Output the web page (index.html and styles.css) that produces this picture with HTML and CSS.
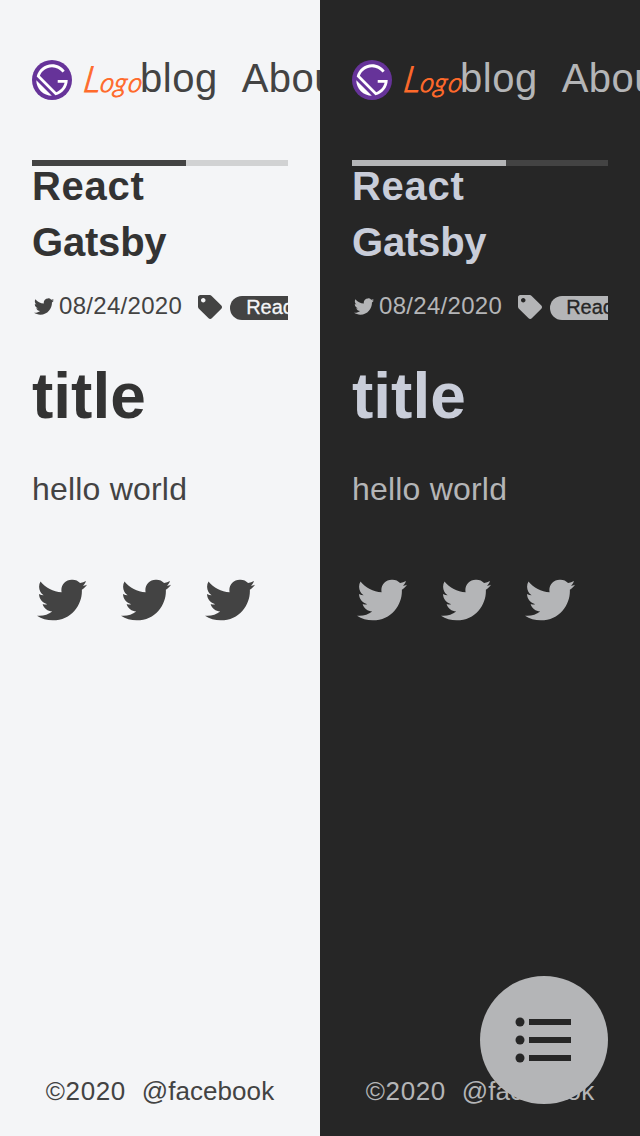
FILE: index.html
```html
<!DOCTYPE html>
<html lang="en">
<head>
<meta charset="utf-8">
<title>blog</title>
<link rel="stylesheet" href="styles.css">
</head>
<body>
<svg class="defs" aria-hidden="true">
  <symbol id="logo" viewBox="0 0 28 28"><circle cx="14" cy="14" r="14" fill="#639"/><path fill="#fff" d="M6.2 21.8C4.1 19.7 3 16.9 3 14.2L13.9 25c-2.8-.1-5.6-1.1-7.7-3.2zm10.2 2.9L3.3 11.6C4.4 6.7 8.8 3 14 3c3.7 0 6.9 1.8 8.9 4.5l-1.5 1.3C19.700 6.500 17 5 14 5c-3.900 0-7.200 2.500-8.500 6L17 22.500c2.900-1 5.100-3.500 5.800-6.500H18v-2h7c0 5.200-3.700 9.600-8.600 10.700z"/></symbol>
  <symbol id="bird" viewBox="96 174 832 676"><path d="M928 258c-22 9-45 15-72 18 25-17 45-45 55-80-30 18-62 30-98 35A170.100 170.100 0 0 0 672 174c-94.5 0-170.5 76.6-170.5 170.6 0 13.2 1.6 26.4 4.2 39.1-141.5-7.4-267.7-75-351.6-178.5a169.32 169.32 0 0 0-23.2 86.1c0 59.2 30.1 111.400 76 142.100a172 172 0 0 1-77.100-21.700v2.100c0 82.900 58.600 151.600 136.700 167.400a180.600 180.600 0 0 1-44.900 5.800c-11.100 0-21.600-1.100-32.200-2.600C211 652 273.900 701.100 348.800 702.700c-58.600 45.900-132 72.900-211.700 72.900-14.300 0-27.500-.5-41.200-2.100C171.500 822 261.200 850 357.800 850 671.400 850 843 590.200 843 364.700c0-7.400 0-14.800-.5-22.200 33.200-24.300 62.300-50 85.500-84.500z"/></symbol>
  <symbol id="tag" viewBox="0 0 512 512"><path d="M0 252V48C0 21.500 21.500 0 48 0h204a48 48 0 0 1 34 14l212 212c18.700 18.700 18.700 49.100 0 67.900L293.800 498c-18.700 18.700-49.100 18.700-67.900 0L14 286a48 48 0 0 1-14-34zM112 64c-26.500 0-48 21.500-48 48s21.500 48 48 48 48-21.500 48-48-21.500-48-48-48z"/></symbol>
</svg>
<main class="screens">
  <section class="screen light">
    <header class="nav">
      <svg class="mark"><use href="#logo"/></svg>
      <svg class="word" viewBox="0 0 60 48"><text y="36" transform="translate(8 0) skewX(-9)"><tspan class="cap" x="0">L</tspan><tspan x="17">o</tspan><tspan x="31">g</tspan><tspan x="45">o</tspan></text></svg>
      <a class="link">blog</a><a class="link">About</a>
    </header>
    <div class="progress"><div class="done"></div></div>
    <h2 class="post"><span class="loose">React</span><br>Gatsby</h2>
    <div class="meta">
      <svg class="small-bird"><use href="#bird"/></svg><span class="date">08/24/2020</span>
      <svg class="tag"><use href="#tag"/></svg><span class="pill">React</span>
    </div>
    <h1 class="title">title</h1>
    <p class="copy">hello world</p>
    <div class="social"><svg class="bird"><use href="#bird"/></svg><svg class="bird"><use href="#bird"/></svg><svg class="bird"><use href="#bird"/></svg></div>
    <footer class="footer"><span class="year">©2020</span><span>@facebook</span></footer>
  </section>
  <section class="screen dark">
    <header class="nav">
      <svg class="mark"><use href="#logo"/></svg>
      <svg class="word" viewBox="0 0 60 48"><text y="36" transform="translate(8 0) skewX(-9)"><tspan class="cap" x="0">L</tspan><tspan x="17">o</tspan><tspan x="31">g</tspan><tspan x="45">o</tspan></text></svg>
      <a class="link">blog</a><a class="link">About</a>
    </header>
    <div class="progress"><div class="done"></div></div>
    <h2 class="post"><span class="loose">React</span><br>Gatsby</h2>
    <div class="meta">
      <svg class="small-bird"><use href="#bird"/></svg><span class="date">08/24/2020</span>
      <svg class="tag"><use href="#tag"/></svg><span class="pill">React</span>
    </div>
    <h1 class="title">title</h1>
    <p class="copy">hello world</p>
    <div class="social"><svg class="bird"><use href="#bird"/></svg><svg class="bird"><use href="#bird"/></svg><svg class="bird"><use href="#bird"/></svg></div>
    <footer class="footer"><span class="year">©2020</span><span>@facebook</span></footer>
    <button class="fab" aria-label="Contents"><svg viewBox="0 0 24 24" width="72" height="72"><circle cx="4" cy="6" r="1.500"/><circle cx="4" cy="12" r="1.500"/><circle cx="4" cy="18" r="1.500"/><path d="M7 5h14v2H7zM7 11h14v2H7zM7 17h14v2H7z"/></svg></button>
  </section>
</main>
</body>
</html>
```
FILE: styles.css
```css
* { box-sizing: border-box; }
body { margin: 0; font-family: "Liberation Sans", Arial, sans-serif; }
.defs { display: none; }
.screens { display: grid; grid-template-columns: 320px 320px; height: 1136px; overflow: hidden; }
.screen { position: relative; display: flex; flex-direction: column; padding: 48px 32px 24px; overflow: hidden; background: var(--bg); color: var(--fg); }
.light { --bg: #f4f5f7; --fg: #434343; --head: #333; --rail: #d1d2d3; }
.dark { --bg: #262626; --fg: #b4b5b7; --head: #c9cdd9; --rail: #434343; }
svg { flex: none; fill: currentColor; }
.nav { display: flex; align-items: center; height: 64px; }
.mark { width: 40px; height: 40px; }
.word { width: 60px; height: 48px; margin-left: 8px; overflow: visible; font: italic 300 27px Lato, sans-serif; fill: #ff6a2b; stroke: #ff6a2b; stroke-width: .9px; }
.cap { font-size: 36px; }
.link { flex: none; font-size: 40px; line-height: 60px; margin-right: 24px; padding-bottom: 4px; letter-spacing: .5px; }
.progress { height: 6px; margin-top: 48px; background: var(--rail); }
.done { width: 60%; height: 6px; background: var(--fg); }
.post { margin: -8px 0 0; font-size: 40px; line-height: 56px; letter-spacing: -.2px; color: var(--head); }
.loose { letter-spacing: .7px; }
.meta { display: flex; align-items: center; height: 32px; margin-top: 21px; overflow: hidden; white-space: nowrap; }
.small-bird { width: 20px; height: 17px; margin: 0 5px 2px 2px; }
.date { padding-bottom: 2px; font-size: 24px; letter-spacing: .3px; }
.tag { width: 24px; height: 24px; margin: 0 8px 0 16px; }
.pill { flex: none; height: 24px; margin-top: 2px; padding: 0 16px; border-radius: 12px; background: var(--fg); color: var(--bg); font-size: 20px; line-height: 23px; -webkit-text-stroke: .3px var(--bg); }
.title { margin: 37px 0 0; font-size: 64px; line-height: 72px; color: var(--head); }
.copy { margin: 33px 0 0; font-size: 32px; line-height: 48px; letter-spacing: .2px; }
.social { display: flex; gap: 34px; margin: 66px 0 0 5px; }
.bird { width: 50px; height: 42px; }
.footer { display: flex; justify-content: center; gap: 16px; margin-top: auto; font-size: 26px; line-height: 42px; letter-spacing: .05px; }
.year { letter-spacing: .6px; }
.fab { position: absolute; right: 32px; bottom: 32px; width: 128px; height: 128px; padding: 0; display: grid; place-items: center; border: 0; border-radius: 50%; background: var(--fg); color: var(--bg); }
```
